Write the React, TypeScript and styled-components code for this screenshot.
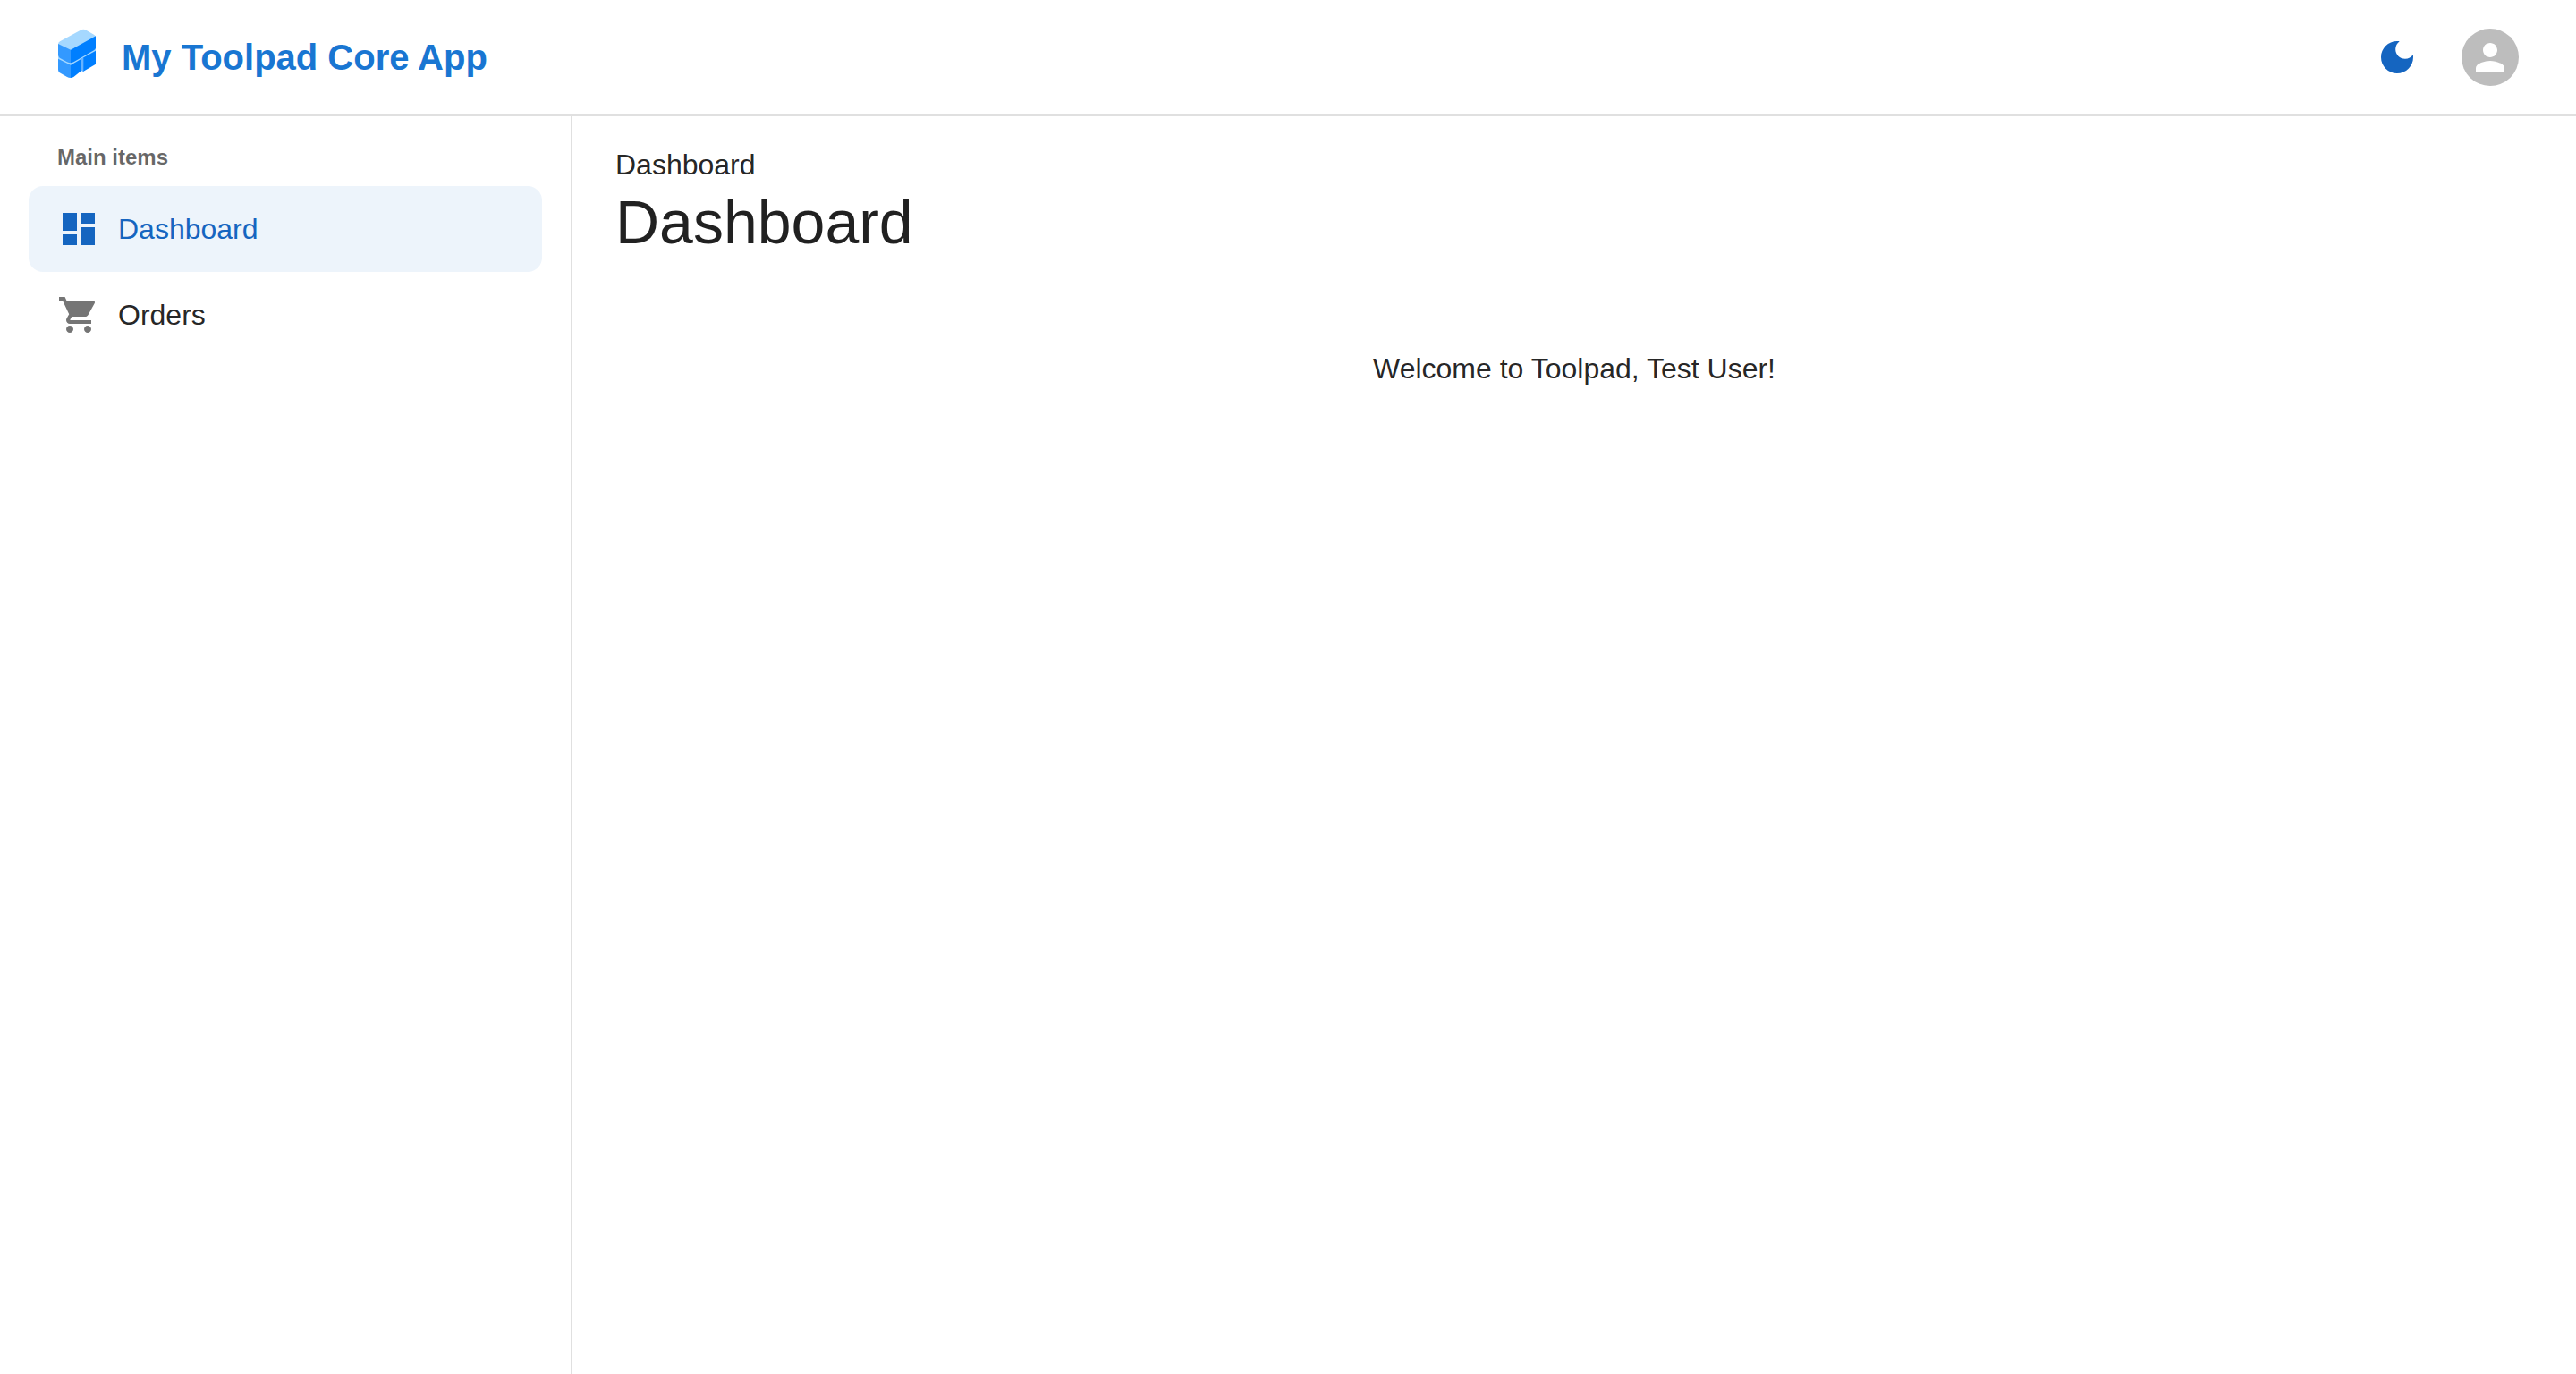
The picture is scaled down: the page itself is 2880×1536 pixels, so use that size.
import React from "react";
import styled, { createGlobalStyle } from "styled-components";

const GlobalStyle = createGlobalStyle`
  *, *::before, *::after { box-sizing: border-box; }
  body {
    margin: 0;
    background: #ffffff;
    color: rgba(0, 0, 0, 0.87);
    font-family: "Liberation Sans", Arial, sans-serif;
    font-size: 32px;
    line-height: 48px;
  }
`;

const Page = styled.div`
  display: flex;
  flex-direction: column;
  min-height: 100vh;
`;

const Header = styled.header`
  display: flex;
  align-items: center;
  justify-content: space-between;
  padding: 24px 56px 24px 64px;
  border-bottom: 2px solid #e0e0e0;
`;

const Brand = styled.a`
  display: flex;
  align-items: center;
  gap: 28px;
  color: #1976d2;
  text-decoration: none;
`;

const BrandName = styled.span`
  font-size: 40px;
  line-height: 64px;
  font-weight: 700;
`;

const Actions = styled.div`
  display: flex;
  align-items: center;
  gap: 24px;
`;

const IconButton = styled.button`
  display: flex;
  align-items: center;
  justify-content: center;
  width: 80px;
  height: 80px;
  padding: 0;
  border: 0;
  border-radius: 50%;
  background: transparent;
  color: #1565c0;
  cursor: pointer;
`;

const Avatar = styled.span`
  display: flex;
  align-items: center;
  justify-content: center;
  width: 64px;
  height: 64px;
  border-radius: 50%;
  background: #bdbdbd;
  color: #ffffff;
`;

const Body = styled.div`
  display: flex;
  flex: 1;
`;

const Sidebar = styled.nav`
  flex: 0 0 640px;
  padding: 14px 32px;
  border-right: 2px solid #e0e0e0;
`;

const SectionTitle = styled.h2`
  margin: 0;
  padding: 0 32px;
  color: rgba(0, 0, 0, 0.6);
  font-size: 24px;
  line-height: 64px;
  font-weight: 700;
`;

const NavList = styled.ul`
  margin: 0;
  padding: 0;
  list-style: none;
`;

const NavLink = styled.a<{ $selected?: boolean }>`
  display: flex;
  align-items: center;
  gap: 20px;
  height: 96px;
  padding: 0 32px;
  border-radius: 16px;
  background: ${(p) => (p.$selected ? "rgba(25, 118, 210, 0.08)" : "transparent")};
  color: ${(p) => (p.$selected ? "#1565c0" : "rgba(0, 0, 0, 0.87)")};
  text-decoration: none;

  svg {
    color: ${(p) => (p.$selected ? "#1565c0" : "#757575")};
  }
`;

const Main = styled.main`
  flex: 1;
  min-width: 0;
  padding: 30px 48px;
`;

const CrumbList = styled.ol`
  display: flex;
  margin: 0;
  padding: 0;
  list-style: none;
`;

const PageTitle = styled.h1`
  margin: 0;
  font-size: 68px;
  line-height: 80px;
  font-weight: 400;
`;

const Content = styled.section`
  display: flex;
  flex-direction: column;
  align-items: center;
  padding: 100px 0;
  text-align: center;
`;

const Message = styled.p`
  margin: 0;
`;

const Icon = ({ d }: { d: string }) => (
  <svg width="48" height="48" viewBox="0 0 24 24" fill="currentColor" aria-hidden="true">
    <path d={d} />
  </svg>
);

const icons = {
  moon: "M12 3c-4.97 0-9 4.03-9 9s4.03 9 9 9 9-4.03 9-9c0-.46-.04-.92-.1-1.36-.98 1.37-2.58 2.26-4.4 2.26-2.98 0-5.4-2.42-5.4-5.4 0-1.81.89-3.42 2.26-4.4-.44-.06-.9-.1-1.36-.1z",
  person:
    "M12 12c2.21 0 4-1.79 4-4s-1.79-4-4-4-4 1.79-4 4 1.79 4 4 4zm0 2c-2.67 0-8 1.34-8 4v2h16v-2c0-2.66-5.33-4-8-4z",
  dashboard: "M3 13h8V3H3v10zm0 8h8v-6H3v6zm10 0h8V11h-8v10zm0-18v6h8V3h-8z",
  cart: "M7 18c-1.1 0-1.99.9-1.99 2S5.9 22 7 22s2-.9 2-2-.9-2-2-2zM1 2v2h2l3.6 7.59-1.35 2.45c-.16.28-.25.61-.25.96 0 1.1.9 2 2 2h12v-2H7.42c-.14 0-.25-.11-.25-.25l.03-.12.9-1.63h7.45c.75 0 1.41-.41 1.75-1.03l3.58-6.49c.08-.14.12-.31.12-.48 0-.55-.45-1-1-1H5.21l-.94-2H1zm16 16c-1.1 0-1.99.9-1.99 2s.89 2 1.99 2 2-.9 2-2-.9-2-2-2z",
};

const Logo = () => (
  <svg width="44" height="64" viewBox="72 66 132 192" aria-hidden="true">
    <path fill="#a5d8ff" d="M75 156V172L117 192 160 168 201 146V132L160 150 117 174Z" />
    <path fill="#a5d8ff" d="M75 119Q75 112 81 109L150 71Q160 66 169 71L195 86Q201 89 201 94L117 140Z" />
    <path fill="#3399ff" d="M75 117 117 137V181Q111 181 105 178L80 164Q75 160 75 154Z" />
    <path fill="#007fff" d="M117 137 201 91V130Q201 135 196 138L127 178Q121 181 117 181Z" />
    <path fill="#3399ff" d="M75 167 117 188V231Q110 231 105 228L80 214Q75 210 75 204Z" />
    <path fill="#66b2ff" d="M153 166 162 161V209L158 210 153 207Z" />
    <path fill="#007fff" d="M117 188 153 167V207L127 228Q121 231 117 231Z" />
    <path fill="#007fff" d="M160 163 201 140V185L160 209Z" />
  </svg>
);

const navItems = [
  { label: "Dashboard", icon: icons.dashboard, href: "#dashboard", selected: true },
  { label: "Orders", icon: icons.cart, href: "#orders", selected: false },
];

export default function App() {
  return (
    <Page>
      <GlobalStyle />
      <Header>
        <Brand href="#home">
          <Logo />
          <BrandName>My Toolpad Core App</BrandName>
        </Brand>
        <Actions>
          <IconButton type="button" aria-label="Switch to dark mode">
            <Icon d={icons.moon} />
          </IconButton>
          <IconButton type="button" aria-label="Current user">
            <Avatar>
              <Icon d={icons.person} />
            </Avatar>
          </IconButton>
        </Actions>
      </Header>
      <Body>
        <Sidebar aria-label="Main">
          <SectionTitle>Main items</SectionTitle>
          <NavList>
            {navItems.map((item) => (
              <li key={item.label}>
                <NavLink
                  href={item.href}
                  $selected={item.selected}
                  aria-current={item.selected ? "page" : undefined}
                >
                  <Icon d={item.icon} />
                  <span>{item.label}</span>
                </NavLink>
              </li>
            ))}
          </NavList>
        </Sidebar>
        <Main>
          <nav aria-label="Breadcrumb">
            <CrumbList>
              <li aria-current="page">Dashboard</li>
            </CrumbList>
          </nav>
          <PageTitle>Dashboard</PageTitle>
          <Content>
            <Message>Welcome to Toolpad, Test User!</Message>
          </Content>
        </Main>
      </Body>
    </Page>
  );
}
